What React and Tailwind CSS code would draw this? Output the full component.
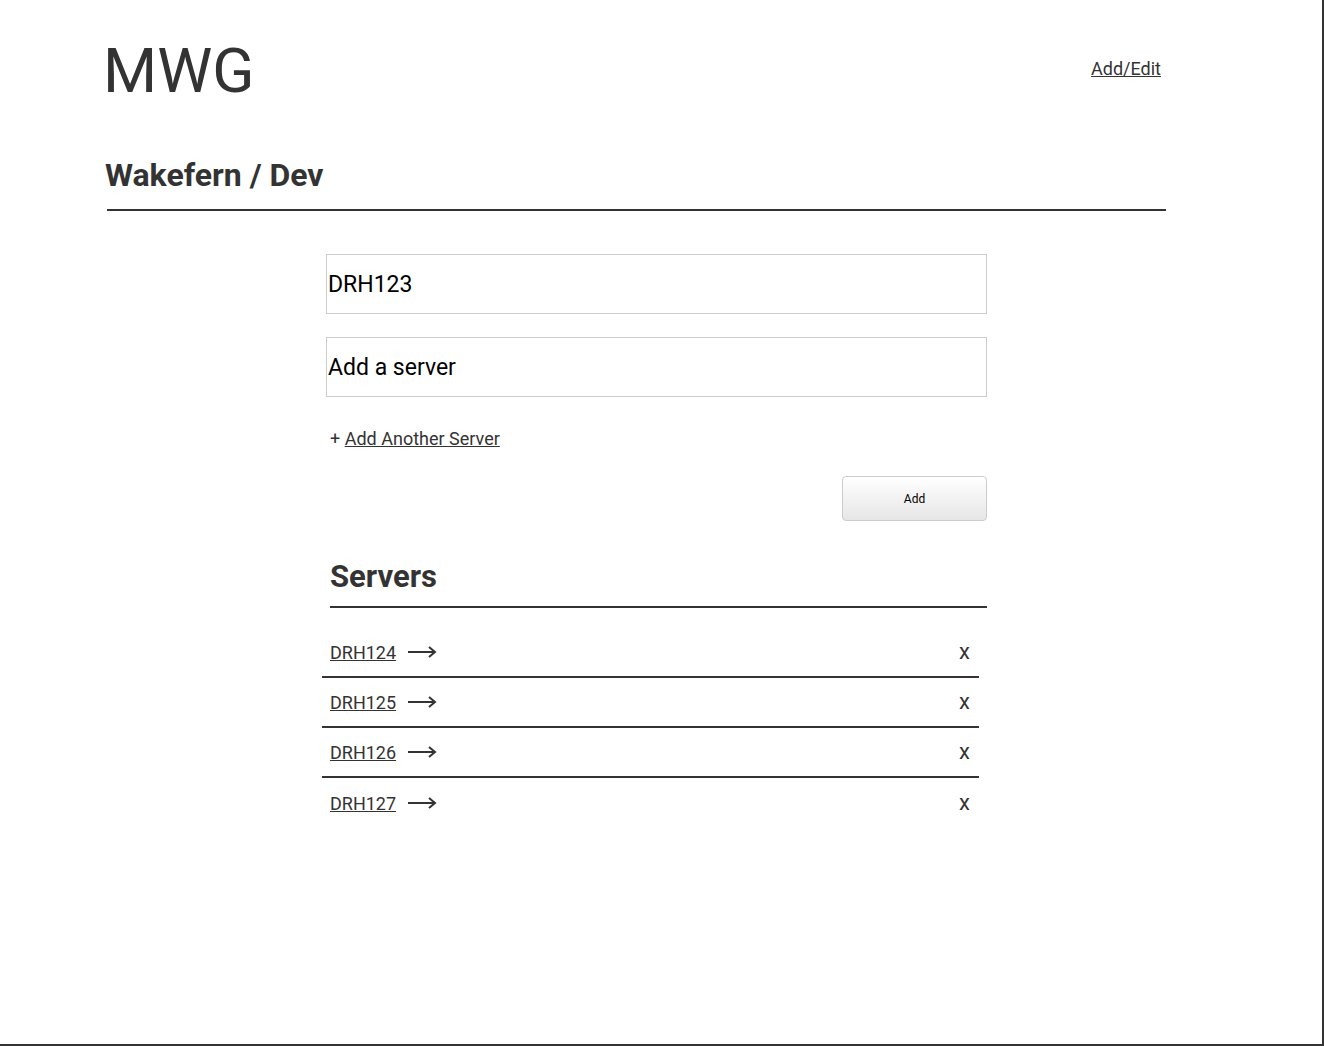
import React from 'react'

const servers = ['DRH124', 'DRH125', 'DRH126', 'DRH127']

const Arrow = () => (
    <svg width="29" height="12" viewBox="0 0 29 12" className="ml-3" fill="none">
        <path d="M0 6h27M21 1l6 5-6 5" stroke="#333" strokeWidth="2" />
    </svg>
)

export default function App() {
    return (
        <div className="w-[1324px] h-[1046px] border-r-2 border-b-2 border-[#333] bg-white text-[#333] font-['Roboto',sans-serif]">
            <div className="pl-[104px] w-[1166px]">
                <div className="flex items-start justify-between pt-[38px]">
                    <h1 className="-ml-[1px] text-[62px] leading-[66px] font-normal">MWG</h1>
                    <a href="#" className="mt-[17px] mr-[5px] text-[18px] underline">Add/Edit</a>
                </div>
                <h2 className="mt-[53px] ml-[1px] text-[32px] font-bold leading-[36px]">Wakefern / Dev</h2>
                <div className="mt-[16px] ml-[3px] h-[2px] bg-[#333]"></div>

                <div className="ml-[222px] w-[661px] mt-[43px]">
                    <input
                        defaultValue="DRH123"
                        className="block w-full h-[60px] border border-[#ccc] px-[1px] text-[23px] text-black outline-none"
                    />
                    <input
                        placeholder="Add a server"
                        className="block w-full h-[60px] mt-[23px] border border-[#ccc] px-[1px] text-[23px] text-black placeholder:text-black outline-none"
                    />
                    <div className="mt-[30px] ml-[4px] text-[18px] leading-[24px]">
                        + <a href="#" className="underline">Add Another Server</a>
                    </div>
                    <div className="flex justify-end mt-[25px]">
                        <button className="w-[145px] h-[45px] rounded-[4px] border border-[#ccc] bg-gradient-to-b from-white to-[#e6e6e6] text-[12px] text-black">
                            Add
                        </button>
                    </div>

                    <h3 className="mt-[38px] ml-[4px] text-[31px] font-bold leading-[36px]">Servers</h3>
                    <div className="mt-[11px] ml-[4px] h-[2px] bg-[#333]"></div>

                    <div className="mt-[20px] -ml-[4px] w-[657px]">
                        {servers.map((s, i) => (
                            <div
                                key={s}
                                className={`flex items-center justify-between h-[50px] pl-[8px] pr-[9px] ${i < servers.length - 1 ? 'border-b-2 border-[#333]' : ''}`}
                            >
                                <div className="flex items-center">
                                    <a href="#" className="text-[18px] underline">{s}</a>
                                    <Arrow />
                                </div>
                                <span className="text-[22px] leading-none">x</span>
                            </div>
                        ))}
                    </div>
                </div>
            </div>
        </div>
    )
}
